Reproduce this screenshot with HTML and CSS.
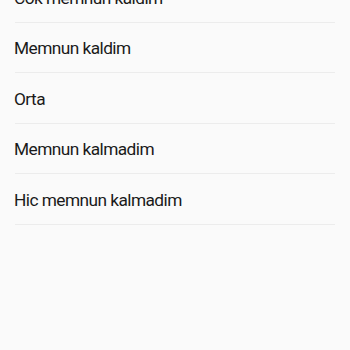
FILE: index.html
```html
<!DOCTYPE html>
<html>
<head>
<meta charset="utf-8">
<link rel="stylesheet" href="styles.css">
</head>
<body>
<ul class="options">
  <li class="option"><span class="label">Cok memnun kaldim</span></li>
  <li class="option"><span class="label">Memnun kaldim</span></li>
  <li class="option"><span class="label">Orta</span></li>
  <li class="option"><span class="label">Memnun kalmadim</span></li>
  <li class="option"><span class="label">Hic memnun kalmadim</span></li>
</ul>
</body>
</html>
```
FILE: styles.css
```css
html, body {
  margin: 0;
  padding: 0;
  background: #fafafa;
  height: 100%;
}
.options {
  list-style: none;
  margin: -28px 0 0 0;
  padding: 0;
}
.option {
  box-sizing: border-box;
  height: 50.5px;
  margin: 0 15px 0 15px;
  border-bottom: 1px solid #ececec;
  display: flex;
  align-items: center;
  padding-top: 2px;
}
.label {
  margin-left: -1px;
  font-family: Roboto, "Noto Sans", sans-serif;
  font-size: 17.3px;
  letter-spacing: -0.55px;
  color: #1a1a1a;
}
```
